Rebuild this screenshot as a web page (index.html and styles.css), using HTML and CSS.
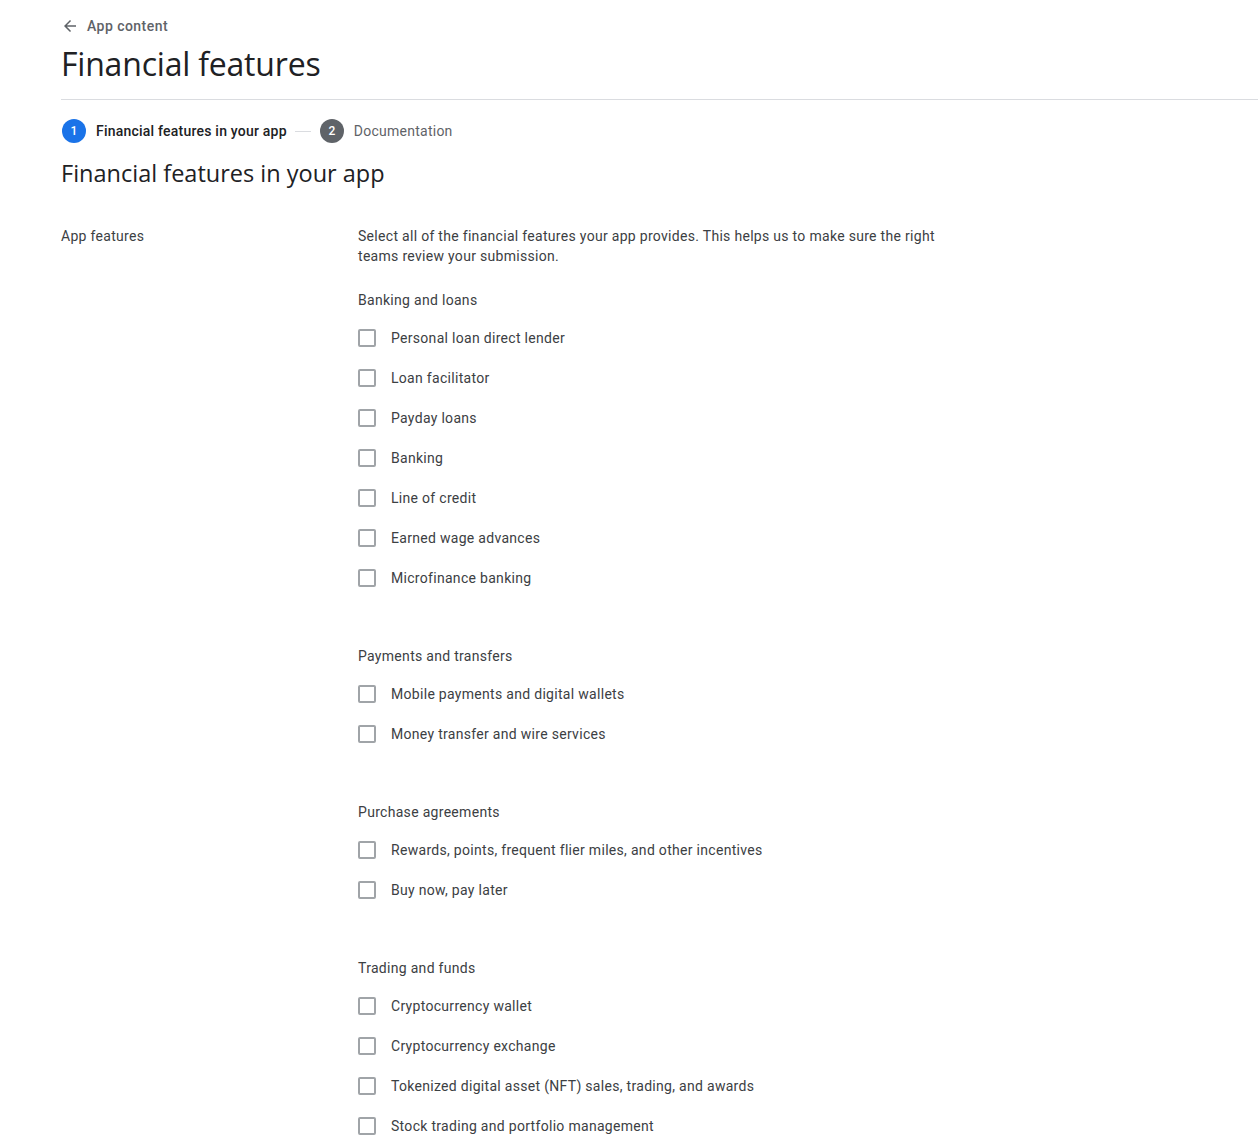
FILE: index.html
```html
<!DOCTYPE html>
<html>
<head>
<meta charset="utf-8">
<link rel="stylesheet" href="styles.css">
</head>
<body>
<div class="page">
  <header class="top">
    <a class="back">
      <svg class="back-icon" width="18" height="18" viewBox="0 0 24 24"><path d="M20 11H7.83l5.59-5.59L12 4l-8 8 8 8 1.410-1.41L7.83 13H20v-2z" fill="#5f6368"/></svg>
      <span>App content</span>
    </a>
    <h1 class="title">Financial features</h1>
  </header>
  <div class="divider"></div>
  <nav class="stepper">
    <div class="step active"><span class="num">1</span><span class="step-label">Financial features in your app</span></div>
    <span class="step-line"></span>
    <div class="step"><span class="num">2</span><span class="step-label">Documentation</span></div>
  </nav>
  <h2 class="section-title">Financial features in your app</h2>
  <div class="form-row">
    <div class="row-label">App features</div>
    <div class="row-body">
      <p class="desc">Select all of the financial features your app provides. This helps us to make sure the right teams review your submission.</p>
      <div class="group">
        <div class="group-title">Banking and loans</div>
        <label class="item"><span class="box"></span>Personal loan direct lender</label>
        <label class="item"><span class="box"></span>Loan facilitator</label>
        <label class="item"><span class="box"></span>Payday loans</label>
        <label class="item"><span class="box"></span>Banking</label>
        <label class="item"><span class="box"></span>Line of credit</label>
        <label class="item"><span class="box"></span>Earned wage advances</label>
        <label class="item"><span class="box"></span>Microfinance banking</label>
      </div>
      <div class="group">
        <div class="group-title">Payments and transfers</div>
        <label class="item"><span class="box"></span>Mobile payments and digital wallets</label>
        <label class="item"><span class="box"></span>Money transfer and wire services</label>
      </div>
      <div class="group">
        <div class="group-title">Purchase agreements</div>
        <label class="item"><span class="box"></span>Rewards, points, frequent flier miles, and other incentives</label>
        <label class="item"><span class="box"></span>Buy now, pay later</label>
      </div>
      <div class="group">
        <div class="group-title">Trading and funds</div>
        <label class="item"><span class="box"></span>Cryptocurrency wallet</label>
        <label class="item"><span class="box"></span>Cryptocurrency exchange</label>
        <label class="item"><span class="box"></span>Tokenized digital asset (NFT) sales, trading, and awards</label>
        <label class="item"><span class="box"></span>Stock trading and portfolio management</label>
      </div>
    </div>
  </div>
</div>
</body>
</html>
```

FILE: styles.css
```css
* { box-sizing: border-box; }
html, body { margin: 0; padding: 0; background: #fff; }
body {
  font-family: Roboto, "Noto Sans", Arial, sans-serif;
  font-size: 14px;
  letter-spacing: 0.3px;
  color: #3c4043;
  overflow: hidden;
}
.page { padding-left: 61px; }
.top { padding-top: 16px; }
.back {
  display: flex;
  align-items: center;
  gap: 8px;
  height: 20px;
  color: #5f6368;
  font-size: 14px;
  font-weight: 500;
  line-height: 20px;
  letter-spacing: 0.45px;
}
.title {
  margin: 8px 0 0;
  font-family: "Open Sans", Roboto, sans-serif;
  font-size: 32px;
  font-weight: 400;
  line-height: 40px;
  color: #202124;
  letter-spacing: -0.2px;
}
.divider {
  margin-top: 15px;
  height: 1px;
  background: #dadce0;
}
.stepper {
  display: flex;
  align-items: center;
  height: 24px;
  margin-top: 19px;
}
.step { display: flex; align-items: center; gap: 10px; }
.num {
  width: 24px;
  height: 24px;
  border-radius: 50%;
  background: #5f6368;
  color: #fff;
  font-size: 12px;
  font-weight: 500;
  letter-spacing: 0;
  display: flex;
  align-items: center;
  justify-content: center;
  margin-left: 1px;
}
.step.active .num { background: #1a73e8; }
.step-label { color: #5f6368; font-size: 14px; line-height: 20px; }
.step.active .step-label { color: #202124; font-weight: 500; letter-spacing: 0.22px; }
.step-line {
  width: 16px;
  height: 1px;
  background: #dadce0;
  margin: 0 8px;
}
.step-line + .step .step-label { letter-spacing: 0.25px; }
.section-title {
  margin: 14px 0 0;
  font-family: "Open Sans", Roboto, sans-serif;
  font-size: 23.5px;
  font-weight: 400;
  line-height: 32px;
  letter-spacing: 0;
  color: #202124;
}
.form-row {
  display: flex;
  margin-top: 37px;
}
.row-label {
  width: 297px;
  flex: none;
  line-height: 20px;
  color: #3c4043;
}
.row-body { width: 600px; }
.desc { margin: 0; line-height: 20px; color: #3c4043; }
.group { margin-top: 24px; }
.group + .group { margin-top: 48px; }
.group-title { line-height: 20px; margin-bottom: 8px; color: #3c4043; }
.item {
  display: flex;
  align-items: center;
  height: 40px;
  color: #3c4043;
}
.box {
  width: 18px;
  height: 18px;
  border: 2px solid #a0a4a8;
  border-radius: 2px;
  margin-right: 15px;
  flex: none;
}
```
